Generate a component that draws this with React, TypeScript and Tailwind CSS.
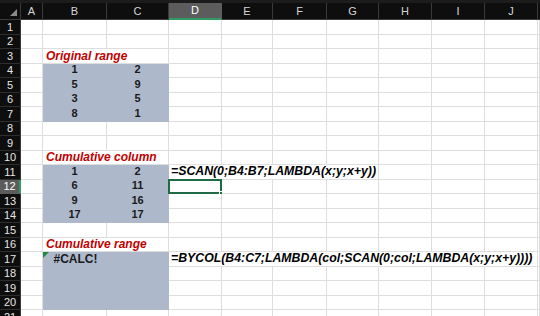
import React from 'react';

const COLS = ['A', 'B', 'C', 'D', 'E', 'F', 'G', 'H', 'I', 'J'];
const SELECTED_COL = 'D';
const SELECTED_ROW = 12;

type Cell = {
  span?: number;
  text?: string;
  kind?: 'title' | 'num' | 'formula' | 'error';
  fill?: boolean;
  selected?: boolean;
};

// sheet content by row; each entry is a list of cells starting at column A
const rows: Record<number, Cell[]> = {
  3: [{}, { span: 2, text: 'Original range', kind: 'title' }],
  4: [{}, { text: '1', kind: 'num', fill: true }, { text: '2', kind: 'num', fill: true }],
  5: [{}, { text: '5', kind: 'num', fill: true }, { text: '9', kind: 'num', fill: true }],
  6: [{}, { text: '3', kind: 'num', fill: true }, { text: '5', kind: 'num', fill: true }],
  7: [{}, { text: '8', kind: 'num', fill: true }, { text: '1', kind: 'num', fill: true }],
  10: [{}, { span: 2, text: 'Cumulative column', kind: 'title' }],
  11: [
    {},
    { text: '1', kind: 'num', fill: true },
    { text: '2', kind: 'num', fill: true },
    { span: 4, text: '=SCAN(0;B4:B7;LAMBDA(x;y;x+y))', kind: 'formula' },
  ],
  12: [{}, { text: '6', kind: 'num', fill: true }, { text: '11', kind: 'num', fill: true }, { selected: true }],
  13: [{}, { text: '9', kind: 'num', fill: true }, { text: '16', kind: 'num', fill: true }],
  14: [{}, { text: '17', kind: 'num', fill: true }, { text: '17', kind: 'num', fill: true }],
  16: [{}, { span: 2, text: 'Cumulative range', kind: 'title' }],
  17: [
    {},
    { text: '#CALC!', kind: 'error', fill: true },
    { fill: true },
    { span: 7, text: '=BYCOL(B4:C7;LAMBDA(col;SCAN(0;col;LAMBDA(x;y;x+y))))', kind: 'formula' },
  ],
  18: [{}, { fill: true }, { fill: true }],
  19: [{}, { fill: true }, { fill: true }],
  20: [{}, { fill: true }, { fill: true }],
};

const spanClass: Record<number, string> = {
  1: 'col-span-1',
  2: 'col-span-2',
  4: 'col-span-4',
  7: 'col-span-7',
};

function buildRow(r: number): Cell[] {
  const given = rows[r] ?? [];
  const out: Cell[] = [...given];
  let used = out.reduce((n, c) => n + (c.span ?? 1), 0);
  while (used < COLS.length) {
    out.push({});
    used++;
  }
  out.push({}); // column K sliver
  return out;
}

function SheetCell({ cell }: { cell: Cell }) {
  const base = 'relative flex items-end overflow-visible whitespace-nowrap border-r border-b leading-none';
  const color = cell.fill ? 'bg-[#adb9ca] border-[#adb9ca]' : 'bg-white border-[#dedede]';

  let content: React.ReactNode = null;
  if (cell.kind === 'title') {
    content = (
      <span className="pl-[3px] pb-[1px] text-[12px] font-bold italic text-[#c00000]">{cell.text}</span>
    );
  } else if (cell.kind === 'num') {
    content = <span className="w-full pb-[2px] text-center text-[11px] font-bold text-[#1a1a1a]">{cell.text}</span>;
  } else if (cell.kind === 'formula') {
    content = <span className="pl-[2px] pb-[1px] text-[12.3px] font-bold italic text-black">{cell.text}</span>;
  } else if (cell.kind === 'error') {
    content = (
      <>
        <span className="absolute left-0 top-0 h-0 w-0 border-t-[6px] border-r-[6px] border-t-[#1e8a3c] border-r-transparent" />
        <span className="w-full pl-[2px] pb-[1px] text-center text-[12px] font-bold text-[#1a1a1a]">{cell.text}</span>
      </>
    );
  }

  return (
    <div className={`${base} ${color} ${spanClass[cell.span ?? 1]}`}>
      {content}
      {cell.selected && (
        <div className="absolute -left-px -top-px -right-px -bottom-px border-2 border-[#1f6b43]">
          <span className="absolute -right-[4px] -bottom-[4px] h-[5px] w-[5px] bg-[#1f6b43] border border-white" />
        </div>
      )}
    </div>
  );
}

export default function App() {
  const rowNums = Array.from({ length: 21 }, (_, i) => i + 1);

  return (
    <div className="w-[540px] h-[316px] overflow-hidden bg-white font-['Liberation_Sans',Arial,sans-serif]">
      {/* strip left over from the ribbon */}
      <div className="h-[3px] bg-[#1c1c1c]" />

      <div className="grid grid-cols-[21px_22px_64px_62px_53px_51px_54px_52px_53px_53px_53px_1fr] grid-rows-[17px] auto-rows-[14.5px]">
        {/* header row */}
        <div className="relative bg-[#0e0e0e] border-r border-b border-[#3a3a3a]">
          <span className="absolute right-[3px] bottom-[3px] h-0 w-0 border-b-[7px] border-l-[7px] border-b-[#8a8a8a] border-l-transparent" />
        </div>
        {COLS.map(c => (
          <div
            key={c}
            className={`flex items-center justify-center text-[11px] border-r ${
              c === SELECTED_COL
                ? 'bg-[#5c5c5c] text-white border-[#5c5c5c] border-b-2 border-b-[#2f9a62]'
                : 'bg-[#0e0e0e] text-[#d6d6d6] border-[#3a3a3a] border-b border-b-[#3a3a3a]'
            }`}
          >
            {c}
          </div>
        ))}
        <div className="bg-[#0e0e0e] border-b border-[#3a3a3a]" />

        {rowNums.map(r => (
          <React.Fragment key={r}>
            <div
              className={`flex items-center justify-center text-[11px] border-b ${
                r === SELECTED_ROW
                  ? 'bg-[#5c5c5c] text-white border-[#5c5c5c] border-r-2 border-r-[#2f9a62]'
                  : 'bg-[#0e0e0e] text-[#e6e6e6] border-[#2e2e2e] border-r border-r-[#3a3a3a]'
              }`}
            >
              {r}
            </div>
            {buildRow(r).map((cell, i) => (
              <SheetCell key={i} cell={cell} />
            ))}
          </React.Fragment>
        ))}
      </div>
    </div>
  );
}
